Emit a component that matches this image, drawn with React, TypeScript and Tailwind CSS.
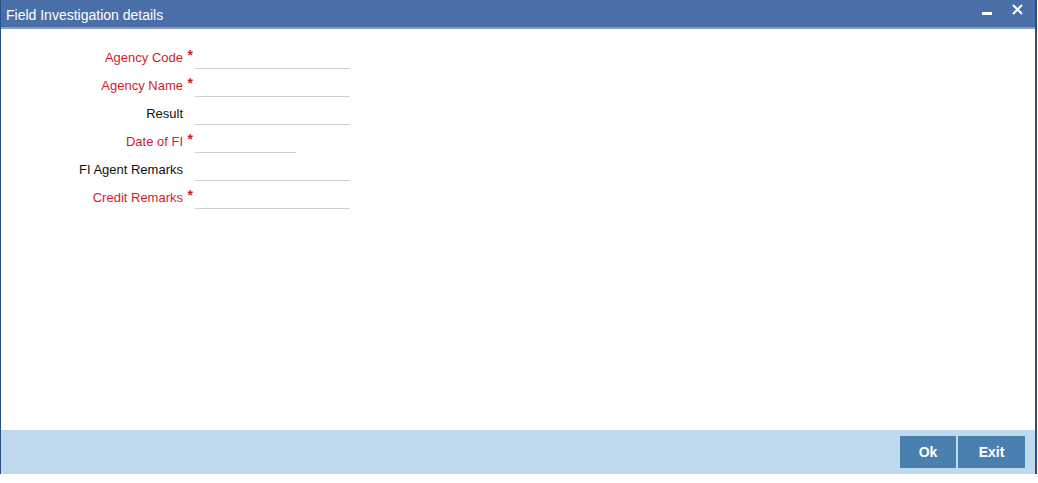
export default function App() {
  const rows = [
    { label: "Agency Code", req: true, w: "w-[155px]" },
    { label: "Agency Name", req: true, w: "w-[155px]" },
    { label: "Result", req: false, w: "w-[155px]" },
    { label: "Date of FI", req: true, w: "w-[101px]" },
    { label: "FI Agent Remarks", req: false, w: "w-[155px]" },
    { label: "Credit Remarks", req: true, w: "w-[155px]" },
  ];

  return (
    <div className="w-[1038px] h-[483px] bg-white font-['Liberation_Sans',Arial,sans-serif]">
      <div className="w-[1037px] h-[474px] flex flex-col border-l border-r-2 border-[#2b4f82]">
        {/* title bar */}
        <header className="h-[29px] bg-[#4a6fa8] border-b-2 border-[#8aa0b8] flex items-start justify-between pl-[5px] pr-[12px]">
          <h1 className="text-[14px] text-white mt-[5px]">Field Investigation details</h1>
          <div className="flex items-start text-white">
            <span className="w-[10px] h-[3px] bg-white mt-[12px] mr-[20px]" />
            <svg width="11" height="11" viewBox="0 0 11 11" className="mt-[4px]">
              <path d="M1 1L10 10M10 1L1 10" stroke="white" strokeWidth="2" />
            </svg>
          </div>
        </header>

        {/* form */}
        <main className="flex-1 pt-[16px]">
          {rows.map((r) => (
            <div key={r.label} className="flex h-[28px]">
              <div className="w-[194px] flex items-start justify-end pr-[2px] pt-[3px]">
                <span className={`text-[13px] ${r.req ? "text-[#d01c2e]" : "text-[#111]"}`}>
                  {r.label}
                </span>
                <span className={`w-[10px] text-[14px] font-bold leading-none text-right ${r.req ? "text-[#d01c2e]" : "text-transparent"}`}>
                  *
                </span>
              </div>
              <div className={`${r.w} h-[24px] border-b border-[#cfcfcf]`} />
            </div>
          ))}
        </main>

        {/* footer */}
        <footer className="h-[44px] bg-[#bfdaed] flex items-center justify-end pr-[10px] gap-[2px]">
          <button className="w-[56px] h-[32px] bg-[#4a80b0] text-white font-bold text-[14px]">Ok</button>
          <button className="w-[67px] h-[32px] bg-[#4a80b0] text-white font-bold text-[14px]">Exit</button>
        </footer>
      </div>
    </div>
  );
}
